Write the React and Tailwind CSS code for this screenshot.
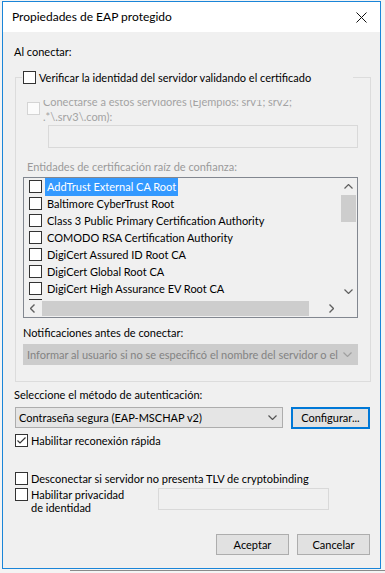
const FONT = "font-['Lato',sans-serif]"

const CERTS = [
  'AddTrust External CA Root',
  'Baltimore CyberTrust Root',
  'Class 3 Public Primary Certification Authority',
  'COMODO RSA Certification Authority',
  'DigiCert Assured ID Root CA',
  'DigiCert Global Root CA',
  'DigiCert High Assurance EV Root CA',
  'DigiCert Trusted Root G4',
]

function Box({ checked, disabled }) {
  return (
    <span
      className={
        disabled
          ? 'flex h-[13px] w-[13px] shrink-0 items-center justify-center border border-[#d4d4d4] bg-[#fbfbfb]'
          : 'flex h-[13px] w-[13px] shrink-0 items-center justify-center border border-[#333333] bg-white'
      }
    >
      {checked && (
        <svg width="11" height="11" viewBox="0 0 11 11">
          <path d="M1.5 5.5 L4 8 L9.5 2.5" fill="none" stroke="#333" strokeWidth="1.2" />
        </svg>
      )}
    </span>
  )
}

function Chevron({ dir = 'down', color = '#606060', w = 9 }) {
  const d = {
    down: 'M0.5 0.5 L4.5 4.5 L8.5 0.5',
    up: 'M0.5 4.5 L4.5 0.5 L8.5 4.5',
  }
  if (dir === 'left' || dir === 'right') {
    return (
      <svg width="5" height="9" viewBox="0 0 5 9">
        <path
          d={dir === 'left' ? 'M4.5 0.5 L0.5 4.5 L4.5 8.5' : 'M0.5 0.5 L4.5 4.5 L0.5 8.5'}
          fill="none"
          stroke={color}
          strokeWidth="1.4"
        />
      </svg>
    )
  }
  return (
    <svg width={w} height="5" viewBox="0 0 9 5">
      <path d={d[dir]} fill="none" stroke={color} strokeWidth="1.2" />
    </svg>
  )
}

function CertList() {
  return (
    <div className="ml-[7px] mt-[2px] flex h-[141px] w-[335px] flex-col border border-[#828790] bg-[#f0f0f0]">
      <div className="flex h-[122px]">
        <div className="flex w-[316px] flex-col overflow-hidden">
          {CERTS.map((c, i) => (
            <div key={c} className="flex h-[17px] shrink-0 items-center">
              <span className="ml-[5px]">
                <Box />
              </span>
              <span
                className={
                  i === 0
                    ? 'ml-[3px] flex h-[18px] items-center whitespace-nowrap bg-[#3399ff] px-[2px] text-white'
                    : 'ml-[3px] flex h-[17px] items-center whitespace-nowrap px-[2px] text-black'
                }
              >
                {c}
              </span>
            </div>
          ))}
        </div>
        <div className="flex w-[17px] flex-col items-center bg-[#f0f0f0]">
          <div className="flex h-[17px] w-full items-center justify-center">
            <Chevron dir="up" />
          </div>
          <div className="h-[27px] w-[15px] bg-[#cdcdcd]" />
          <div className="flex-1" />
          <div className="flex h-[17px] w-full items-center justify-center">
            <Chevron dir="down" />
          </div>
        </div>
      </div>
      <div className="flex h-[17px] items-center">
        <div className="flex h-[17px] w-[17px] items-center justify-center">
          <Chevron dir="left" />
        </div>
        <div className="ml-[1px] h-[15px] w-[267px] bg-[#cdcdcd]" />
        <div className="flex-1" />
        <div className="flex h-[17px] w-[17px] items-center justify-center">
          <Chevron dir="right" />
        </div>
        <div className="h-[17px] w-[17px] bg-[#f0f0f0]" />
      </div>
    </div>
  )
}

function Button({ children, focused, w = 'w-[73px]' }) {
  return (
    <div
      className={
        focused
          ? `flex h-[22px] ${w} items-center justify-center border-2 border-[#0078d7] bg-[#e1e1e1]`
          : `flex h-[21px] ${w} items-center justify-center border border-[#adadad] bg-[#e1e1e1]`
      }
    >
      {children}
    </div>
  )
}

export default function App() {
  return (
    <div className={`${FONT} relative h-[573px] w-[385px] overflow-hidden bg-[#f4f4f4] text-[11px] leading-[16px] text-black`}>
      <div className="ml-[2px] mt-[1px] flex h-[568px] w-[379px] flex-col border border-[#1a85d8] bg-[#f0f0f0]">
        {/* title bar */}
        <div className="flex h-[30px] shrink-0 items-center justify-between bg-white pl-[9px] pr-[10px]">
          <span className="pb-[1px] text-[12px]">Propiedades de EAP protegido</span>
          <svg width="11" height="11" viewBox="0 0 11 11" className="mr-[3px]">
            <path d="M0.5 0.5 L10.5 10.5 M10.5 0.5 L0.5 10.5" stroke="#111" strokeWidth="1" />
          </svg>
        </div>

        {/* body */}
        <div className="flex flex-col">
          <div className="ml-[11px] mt-[12px] h-[16px]">Al conectar:</div>

          <div className="relative ml-[12px] mt-[17px] flex h-[305px] w-[356px] flex-col border border-[#dcdcdc]">
            <div className="absolute left-[6px] top-[-7px] flex h-[13px] w-[331px] items-center bg-[#f0f0f0]">
              <span className="ml-[1px]">
                <Box />
              </span>
              <span className="ml-[3px] whitespace-nowrap">
                Verificar la identidad del servidor validando el certificado
              </span>
            </div>

            {/* the label's first line is clipped at the top, as in the original dialog */}
            <div className="ml-[11px] mt-[22px] flex h-[25px] overflow-hidden">
              <span className="mt-[2px]">
                <Box disabled />
              </span>
              <div className="ml-[3px] mt-[-6px] leading-[15px] text-[#a3a3a3]">
                <div className="whitespace-nowrap">Conectarse a estos servidores (Ejemplos: srv1; srv2;</div>
                <div className="whitespace-nowrap">.*\.srv3\.com):</div>
              </div>
            </div>
            <div className="ml-[32px] h-[23px] w-[310px] border border-[#d9d9d9] bg-[#f0f0f0]" />

            <div className="ml-[11px] mt-[11px] h-[16px] text-[#9a9a9a]">
              Entidades de certificación raíz de confianza:
            </div>
            <CertList />

            <div className="ml-[7px] mt-[7px] h-[16px]">Notificaciones antes de conectar:</div>
            <div className="ml-[7px] mt-[3px] flex h-[21px] w-[335px] items-center justify-between border border-[#cccccc] bg-[#cccccc] pl-[3px] pr-[5px] text-[#838383]">
              <span className="whitespace-nowrap overflow-hidden">
                Informar al usuario si no se especificó el nombre del servidor o el
              </span>
              <Chevron color="#a0a0a0" />
            </div>
          </div>

          <div className="ml-[11px] mt-[5px] h-[16px]">Seleccione el método de autenticación:</div>
          <div className="ml-[12px] mt-[4px] flex">
            <div className="flex h-[21px] w-[268px] items-center justify-between border border-[#adadad] bg-[#e5e5e5] pl-[3px] pr-[5px]">
              <span>Contraseña segura (EAP-MSCHAP v2)</span>
              <Chevron color="#555" />
            </div>
            <div className="ml-[8px]">
              <Button focused w="w-[79px]">
                Configurar...
              </Button>
            </div>
          </div>

          <div className="ml-[12px] mt-[5px] flex h-[13px] items-center">
            <Box checked />
            <span className="ml-[3px]">Habilitar reconexión rápida</span>
          </div>

          <div className="ml-[12px] mt-[25px] flex h-[13px] items-center">
            <Box />
            <span className="ml-[3px]">Desconectar si servidor no presenta TLV de cryptobinding</span>
          </div>

          <div className="ml-[12px] mt-[3px] flex">
            <Box />
            <div className="ml-[3px] w-[127px] leading-[13px]">
              <div>Habilitar privacidad</div>
              <div>de identidad</div>
            </div>
            <div className="h-[22px] w-[171px] border border-[#d9d9d9] bg-[#f0f0f0]" />
          </div>

          <div className="mt-[20px] flex justify-end gap-[8px] pr-[10px]">
            <Button>Aceptar</Button>
            <Button>Cancelar</Button>
          </div>
        </div>
      </div>
      <div className="ml-[70px] mt-[1px] h-[1px] bg-[#8a8a8a]" />
    </div>
  )
}
